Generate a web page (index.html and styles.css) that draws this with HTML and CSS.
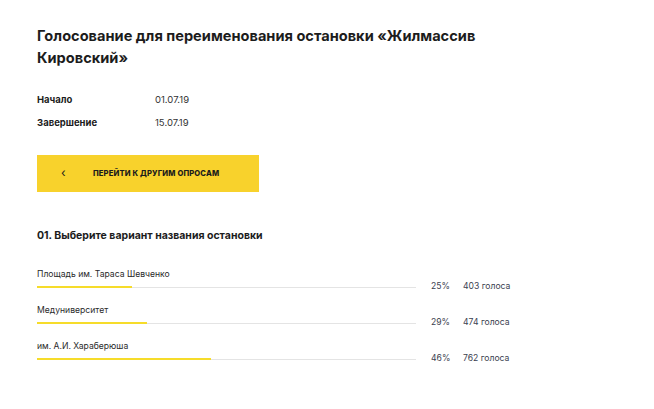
FILE: index.html
```html
<!DOCTYPE html>
<html lang="ru">
<head>
<meta charset="utf-8">
<link rel="stylesheet" href="styles.css">
</head>
<body>
<main class="page">
  <h1 class="title">Голосование для переименования остановки «Жилмассив Кировский»</h1>
  <dl class="meta">
    <div class="meta-row"><dt>Начало</dt><dd>01.07.19</dd></div>
    <div class="meta-row"><dt>Завершение</dt><dd>15.07.19</dd></div>
  </dl>
  <a class="back-btn" href="#">
    <span class="chev">‹</span>
    <span class="btn-text">ПЕРЕЙТИ К ДРУГИМ ОПРОСАМ</span>
  </a>
  <h2 class="question">01. Выберите вариант названия остановки</h2>
  <div class="options">
    <div class="option">
      <div class="opt-label">Площадь им. Тараса Шевченко</div>
      <div class="bar"><div class="fill" style="width:25%"></div></div>
      <div class="pct">25%</div>
      <div class="votes">403 голоса</div>
    </div>
    <div class="option">
      <div class="opt-label">Медуниверситет</div>
      <div class="bar"><div class="fill" style="width:29%"></div></div>
      <div class="pct">29%</div>
      <div class="votes">474 голоса</div>
    </div>
    <div class="option">
      <div class="opt-label">им. А.И. Хараберюша</div>
      <div class="bar"><div class="fill" style="width:46%"></div></div>
      <div class="pct">46%</div>
      <div class="votes">762 голоса</div>
    </div>
  </div>
</main>
</body>
</html>
```
FILE: styles.css
```css
* { box-sizing: border-box; }
html, body { margin: 0; padding: 0; background: #fff; }
body {
  font-family: Inter, "Noto Sans", Roboto, sans-serif;
  color: #1c1c1c;
  min-height: 409px;
}
.page {
  padding: 25px 0 40px 37px;
  width: 654px;
}
.title {
  margin: 0;
  font-size: 14.6px;
  line-height: 22px;
  font-weight: 700;
  width: 470px;
}
.meta {
  margin: 24px 0 0;
  display: flex;
  flex-direction: column;
  gap: 9px;
}
.meta-row {
  display: flex;
  font-size: 9.5px;
  line-height: 14px;
}
.meta-row dt {
  width: 118px;
  font-weight: 700;
}
.meta-row dd {
  margin: 0;
  color: #333;
}
.back-btn {
  margin-top: 25px;
  display: flex;
  align-items: center;
  width: 222px;
  height: 37px;
  background: #f8d22c;
  text-decoration: none;
  color: #1c1c1c;
}
.chev {
  width: 56px;
  padding-left: 24px;
  font-size: 12px;
  line-height: 1;
  margin-top: -2px;
}
.btn-text {
  font-size: 7.6px;
  font-weight: 800;
  letter-spacing: 0.15px;
}
.question {
  margin: 37px 0 0;
  font-size: 10.5px;
  line-height: 14px;
  font-weight: 700;
}
.options {
  margin-top: 25px;
  display: flex;
  flex-direction: column;
  gap: 12px;
}
.option {
  display: grid;
  grid-template-columns: 379px 17px auto;
  column-gap: 15px;
  grid-template-rows: 12px 12px;
  align-items: center;
}
.opt-label {
  grid-column: 1 / -1;
  font-size: 8.6px;
  line-height: 12px;
  color: #2a2a2a;
}
.bar {
  height: 2px;
  background: linear-gradient(#e4e4e4, #e4e4e4) 0 1px / 100% 1px no-repeat;
  margin-top: 1px;
}
.fill {
  height: 2px;
  background: #f6dc2a;
}
.pct, .votes {
  font-size: 8.6px;
  line-height: 12px;
  color: #3b4150;
  white-space: nowrap;
}
```
